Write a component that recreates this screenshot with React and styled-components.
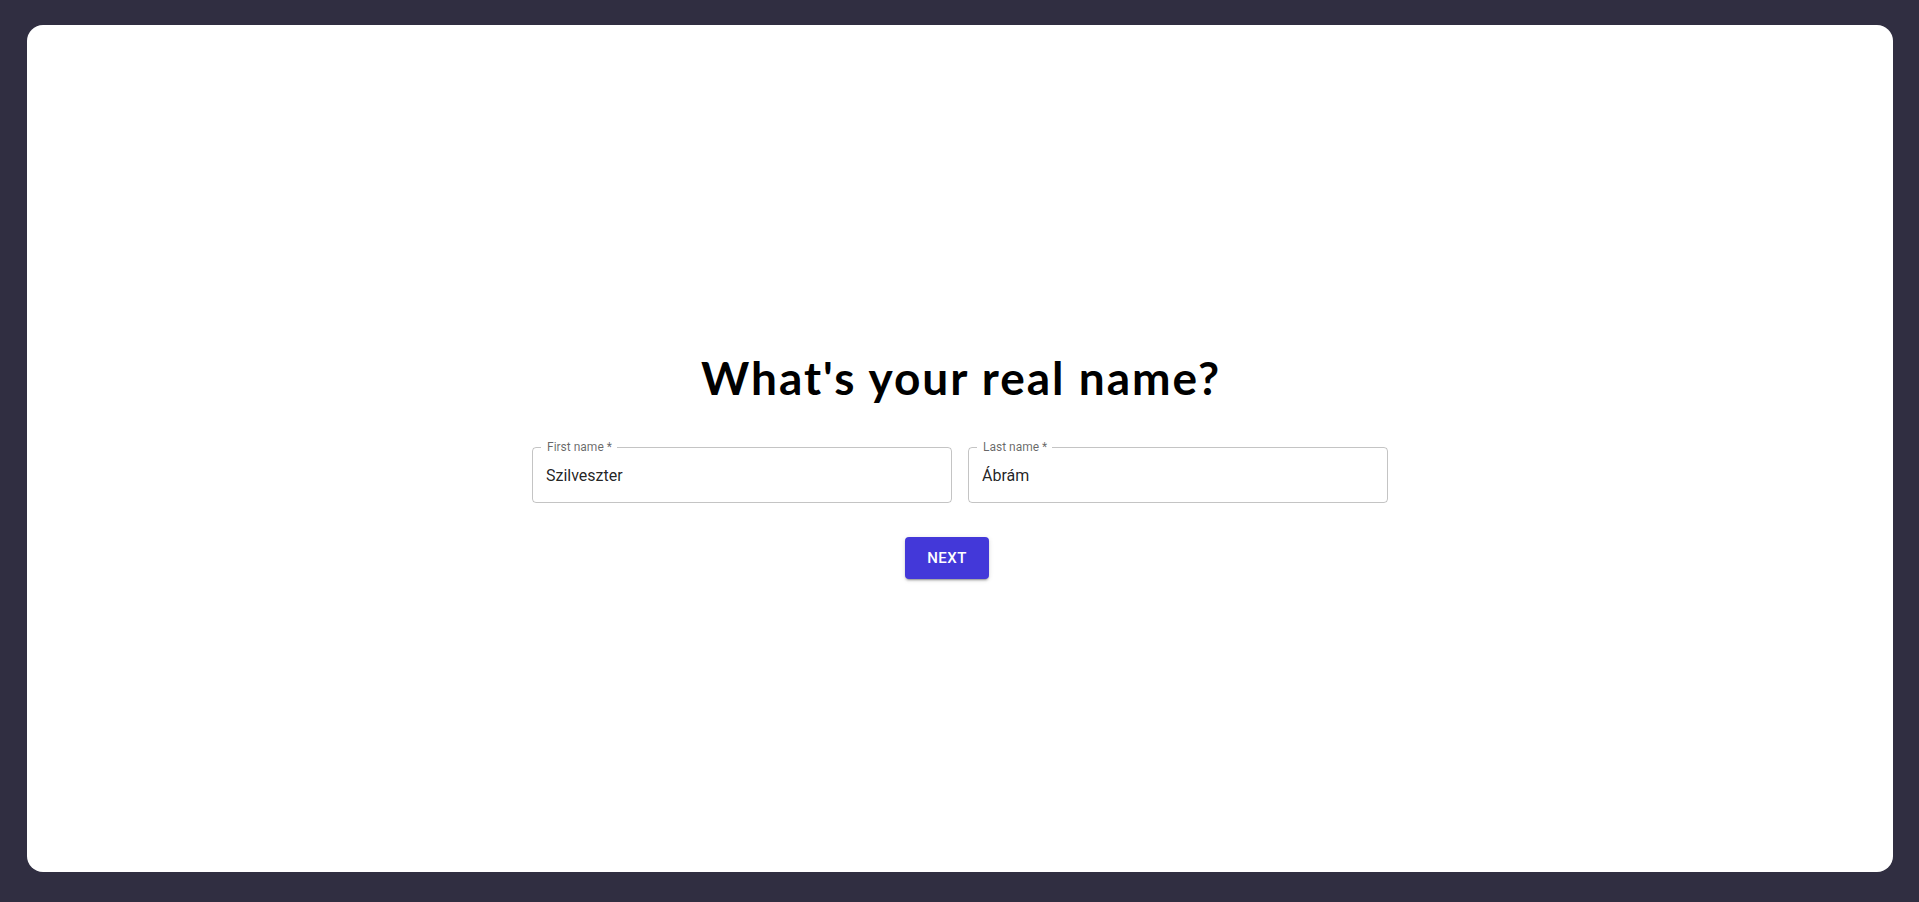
import React from "react";
import styled, { createGlobalStyle } from "styled-components";

const GlobalStyle = createGlobalStyle`
    html,
    body {
        margin: 0;
        padding: 0;
        background: #302e41;
    }
    * {
        box-sizing: border-box;
    }
`;

const Page = styled.div`
    min-height: 100vh;
    display: flex;
    padding: 25px 26px 30px 27px;
`;

const Card = styled.main`
    flex: 1;
    background: #ffffff;
    border-radius: 16px;
    display: flex;
    flex-direction: column;
    align-items: center;
    justify-content: center;
    padding-top: 32px;
`;

const Title = styled.h1`
    margin: 0 0 42px;
    padding-left: 2px;
    font-family: "Lato", "DejaVu Sans", sans-serif;
    font-weight: 700;
    font-size: 46px;
    letter-spacing: 2px;
    line-height: 1.2;
    color: #000;
`;

const Row = styled.div`
    display: flex;
    gap: 16px;
    width: 856px;
`;

const Field = styled.div`
    position: relative;
    flex: 1;
    height: 56px;
    border: 1px solid rgba(0, 0, 0, 0.23);
    border-radius: 4px;
`;

const Label = styled.label`
    position: absolute;
    top: -7px;
    left: 8px;
    padding: 0 5px 0 6px;
    background: #fff;
    font-family: "Roboto", sans-serif;
    font-size: 12px;
    line-height: 13px;
    color: rgba(0, 0, 0, 0.6);
`;

const Input = styled.input`
    display: block;
    width: 100%;
    height: 100%;
    border: none;
    outline: none;
    background: transparent;
    padding: 16.5px 13px;
    font-family: "Roboto", sans-serif;
    font-size: 16px;
    color: rgba(0, 0, 0, 0.87);
`;

const Button = styled.button`
    margin: 34px 26px 0 0;
    height: 42px;
    padding: 0 22px;
    border: none;
    border-radius: 4px;
    background: #4338d9;
    color: #fff;
    font-family: "Roboto", sans-serif;
    font-weight: 500;
    font-size: 15px;
    letter-spacing: 0.46px;
    text-transform: uppercase;
    cursor: pointer;
    box-shadow: 0 3px 1px -2px rgba(0, 0, 0, 0.2), 0 2px 2px 0 rgba(0, 0, 0, 0.14), 0 1px 5px 0 rgba(0, 0, 0, 0.12);
`;

const fields = [
    { id: "first", label: "First name *", value: "Szilveszter" },
    { id: "last", label: "Last name *", value: "Ábrám" },
];

export default function App() {
    return (
        <>
            <GlobalStyle />
            <Page>
                <Card>
                    <Title>What's your real name?</Title>
                    <Row>
                        {fields.map((f) => (
                            <Field key={f.id}>
                                <Label htmlFor={f.id}>{f.label}</Label>
                                <Input id={f.id} defaultValue={f.value} />
                            </Field>
                        ))}
                    </Row>
                    <Button>Next</Button>
                </Card>
            </Page>
        </>
    );
}
